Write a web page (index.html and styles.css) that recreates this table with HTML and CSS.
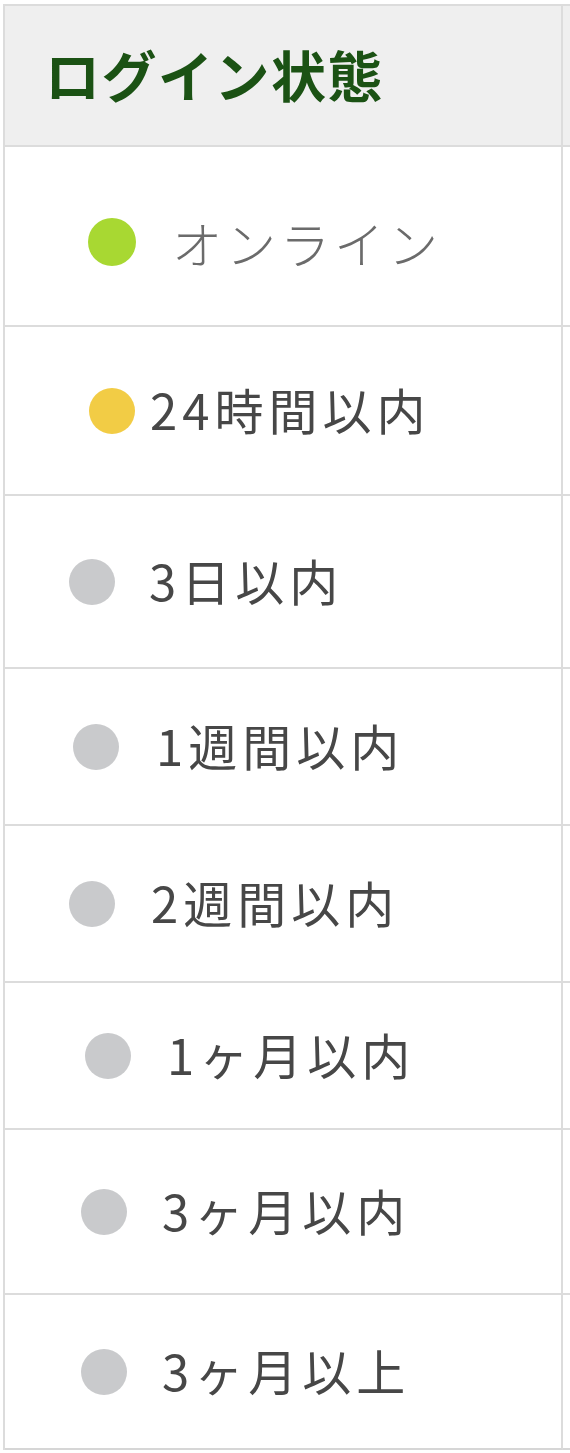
FILE: index.html
```html
<!DOCTYPE html>
<html lang="ja">
<head>
<meta charset="utf-8">
<title>ログイン状態</title>
<link rel="stylesheet" href="styles.css">
</head>
<body>
<div class="table">
  <div class="cell head">ログイン状態</div>
  <div class="cell head next"></div>

  <div class="cell row r1"><span class="dot online"></span><span class="label light">オンライン</span></div>
  <div class="cell next r1"></div>

  <div class="cell row r2"><span class="dot recent"></span><span class="label">24時間以内</span></div>
  <div class="cell next r2"></div>

  <div class="cell row r3"><span class="dot"></span><span class="label">3日以内</span></div>
  <div class="cell next r3"></div>

  <div class="cell row r4"><span class="dot"></span><span class="label">1週間以内</span></div>
  <div class="cell next r4"></div>

  <div class="cell row r5"><span class="dot"></span><span class="label">2週間以内</span></div>
  <div class="cell next r5"></div>

  <div class="cell row r6"><span class="dot"></span><span class="label">1ヶ月以内</span></div>
  <div class="cell next r6"></div>

  <div class="cell row r7"><span class="dot"></span><span class="label">3ヶ月以内</span></div>
  <div class="cell next r7"></div>

  <div class="cell row r8 last"><span class="dot"></span><span class="label">3ヶ月以上</span></div>
  <div class="cell next r8 last"></div>
</div>
</body>
</html>
```

FILE: styles.css
```css
html, body {
  margin: 0;
  padding: 0;
  background: #ffffff;
  overflow: hidden;
}

body {
  font-family: "Noto Sans CJK JP", "Noto Sans", sans-serif;
  padding: 4px 0 0 3px;
}

.table {
  display: grid;
  grid-template-columns: 558px 200px;
  grid-template-rows: 141px 180px 169px 173px 157px 157px 147px 165px 155px;
  width: 758px;
  border-top: 2px solid #dcdcdc;
  border-left: 2px solid #dcdcdc;
}

.cell {
  box-sizing: border-box;
  border-bottom: 2px solid #dcdcdc;
  border-right: 2px solid #dcdcdc;
  background: #ffffff;
}

.cell.last {
  border-bottom-color: #d6d6d6;
}

.head {
  background: #efefef;
  color: #1b5214;
  font-weight: 700;
  font-size: 55px;
  display: flex;
  align-items: center;
  padding: 0 0 6px 40px;
  letter-spacing: 1.5px;
}

.head.next {
  padding: 0;
}

.row {
  display: flex;
  align-items: center;
}

.dot {
  flex: none;
  width: 46px;
  height: 46px;
  border-radius: 50%;
  background: #c9cacc;
}

.dot.online {
  width: 48px;
  height: 48px;
  background: #a8d832;
}

.dot.recent {
  background: #f2cc45;
}

.label {
  font-size: 49px;
  color: #474747;
  line-height: 1;
  letter-spacing: 5px;
  padding-bottom: 4px;
}

.label.light {
  font-size: 50px;
  color: #6b6b6b;
  font-weight: 300;
  letter-spacing: 4px;
  padding-bottom: 0;
}

.r1 { padding: 12px 0 0 83px; }
.r1 .dot { margin-right: 36px; }

.r2 { padding-left: 84px; }
.r2 .dot { margin-right: 15px; }

.r3 { padding-left: 64px; }
.r3 .dot { margin-right: 34px; }

.r4 { padding-left: 68px; }
.r4 .dot { margin-right: 37px; }

.r5 { padding-left: 64px; }
.r5 .dot { margin-right: 36px; }

.r6 { padding-left: 80px; }
.r6 .dot { margin-right: 36px; }

.r7 { padding-left: 76px; }
.r7 .dot { margin-right: 35px; }

.r8 { padding-left: 76px; }
.r8 .dot { margin-right: 35px; }

.next.r1, .next.r2, .next.r3, .next.r4, .next.r5, .next.r6, .next.r7, .next.r8 {
  padding: 0;
}
```
